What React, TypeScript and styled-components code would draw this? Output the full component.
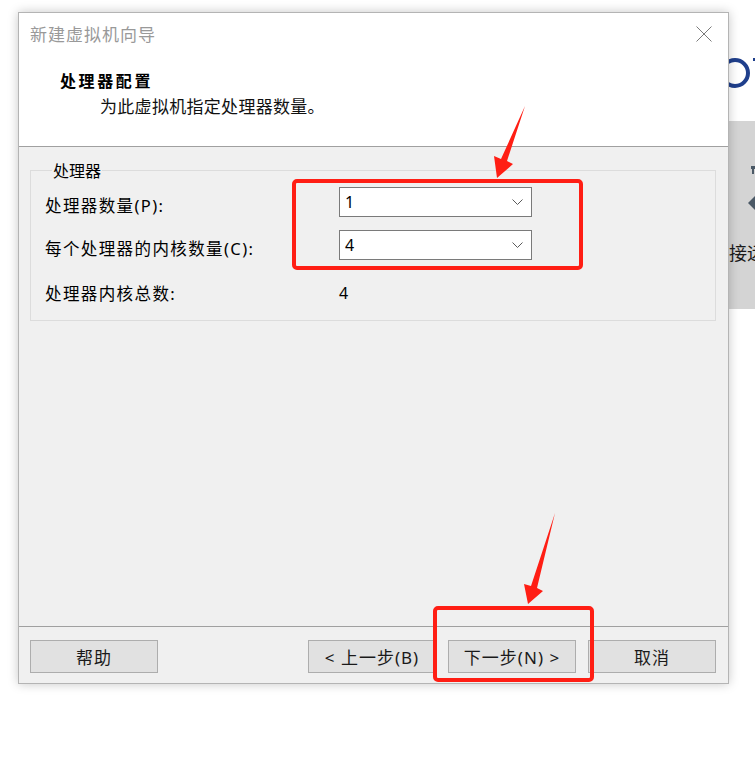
import styled, { createGlobalStyle } from 'styled-components'

const GlobalStyle = createGlobalStyle`
    html, body {
        margin: 0;
        padding: 0;
        background: #ffffff;
    }
    body {
        font-family: "Noto Sans CJK SC", "Noto Sans", sans-serif;
    }
`

const fields = [
    { label: '处理器数量(P):', value: '1' },
    { label: '每个处理器的内核数量(C):', value: '4' },
]

const buttons = [
    { text: '< 上一步(B)' },
    { text: '下一步(N) >' },
    { text: '取消' },
]

const Chevron = () => (
    <svg width="11" height="6" viewBox="0 0 11 6">
        <polyline points="0.5,0.5 5.5,5.5 10.5,0.5" fill="none" stroke="#5a5a5a" strokeWidth="1" />
    </svg>
)

const CloseIcon = () => (
    <svg width="16" height="16" viewBox="0 0 16 16">
        <line x1="0.5" y1="0.5" x2="15.5" y2="15.5" stroke="#7a7a7a" strokeWidth="1" />
        <line x1="15.5" y1="0.5" x2="0.5" y2="15.5" stroke="#7a7a7a" strokeWidth="1" />
    </svg>
)

const App = () => {
    return (
        <>
            <GlobalStyle />
            <Page>
                <DialogArea>
                    <Dialog>
                        <Header>
                            <TitleBar>
                                <Title>新建虚拟机向导</Title>
                                <CloseButton><CloseIcon /></CloseButton>
                            </TitleBar>
                            <Heading>处理器配置</Heading>
                            <Subtitle>为此虚拟机指定处理器数量。</Subtitle>
                        </Header>
                        <Body>
                            <Group>
                                <Legend>处理器</Legend>
                                <FieldGrid>
                                    {fields.map(f => (
                                        <Row key={f.label}>
                                            <Label>{f.label}</Label>
                                            <Dropdown>
                                                <span>{f.value}</span>
                                                <Chevron />
                                            </Dropdown>
                                        </Row>
                                    ))}
                                    <Row $last>
                                        <Label>处理器内核总数:</Label>
                                        <Total>4</Total>
                                    </Row>
                                </FieldGrid>
                            </Group>
                        </Body>
                        <Footer>
                            <Button>帮助</Button>
                            <ButtonGroup>
                                {buttons.map(b => (
                                    <Button key={b.text}>{b.text}</Button>
                                ))}
                            </ButtonGroup>
                        </Footer>
                    </Dialog>
                </DialogArea>
                <BackApp>
                    <BackTop>
                        <svg width="26" height="121" viewBox="0 0 26 121">
                            <circle cx="6" cy="73" r="13" fill="none" stroke="#1f3f8c" strokeWidth="4" />
                            <rect x="24" y="58" width="2" height="3" fill="#1f3f8c" />
                        </svg>
                    </BackTop>
                    <BackPanel>
                        <PanelIcons width="26" height="100" viewBox="0 0 26 100">
                            <rect x="22" y="45" width="4" height="3" fill="#4b5966" />
                            <rect x="23" y="45" width="2" height="8" fill="#4b5966" />
                            <polygon points="26,75 19,82 26,89" fill="#4b5966" />
                        </PanelIcons>
                        <PanelText>接远</PanelText>
                    </BackPanel>
                </BackApp>
                <Annotations width="755" height="758" viewBox="0 0 755 758">
                    <rect x="294" y="181" width="287" height="87" rx="3" fill="none" stroke="#ff1e14" strokeWidth="4" />
                    <rect x="435" y="608" width="157" height="72" rx="3" fill="none" stroke="#ff1e14" strokeWidth="4" />
                    <polygon points="525,106 507,161 513,164 497,178 494,156 501,159" fill="#ff1e14" />
                    <polygon points="555,513 537,588 543,591 528,604 524,584 531,586" fill="#ff1e14" />
                </Annotations>
            </Page>
        </>
    )
}

const Page = styled.div`
    position: relative;
    width: 755px;
    height: 758px;
    display: flex;
    overflow: hidden;
`

const DialogArea = styled.div`
    padding: 12px 0 0 18px;
    position: relative;
    z-index: 1;
`

const Dialog = styled.div`
    width: 709px;
    height: 670px;
    border: 1px solid #b4b4b4;
    box-shadow: 0 0 10px rgba(0, 0, 0, 0.22);
    display: flex;
    flex-direction: column;
    background: #f0f0f0;
`

const Header = styled.div`
    height: 133px;
    background: #ffffff;
    border-bottom: 1px solid #a0a0a0;
    display: flex;
    flex-direction: column;
`

const TitleBar = styled.div`
    height: 42px;
    display: flex;
    align-items: center;
    justify-content: space-between;
    padding: 0 16px 0 11px;
`

const Title = styled.div`
    font-size: 17px;
    letter-spacing: 1px;
    color: #999999;
    line-height: 20px;
`

const CloseButton = styled.div`
    display: flex;
`

const Heading = styled.div`
    margin-top: 15px;
    padding-left: 41px;
    font-size: 16px;
    font-weight: bold;
    letter-spacing: 2.6px;
    color: #000000;
    line-height: 20px;
`

const Subtitle = styled.div`
    margin-top: 6px;
    padding-left: 81px;
    font-size: 17px;
    letter-spacing: 0.3px;
    color: #111111;
    line-height: 20px;
`

const Body = styled.div`
    flex: 1;
    padding: 14px 12px 0 11px;
`

const Group = styled.fieldset`
    margin: 0;
    border: 1px solid #dcdcdc;
    padding: 8px 14px 14px 14px;
`

const Legend = styled.legend`
    margin-left: 7px;
    padding: 0 1px;
    font-size: 16px;
    line-height: 18px;
    color: #000000;
`

const FieldGrid = styled.div`
    display: flex;
    flex-direction: column;
    gap: 13px;
`

const Row = styled.div<{ $last?: boolean }>`
    display: grid;
    grid-template-columns: 294px 193px;
    align-items: center;
    height: ${p => (p.$last ? 31 : 30)}px;
    margin-top: ${p => (p.$last ? 2 : 0)}px;
`

const Label = styled.div`
    font-family: "Noto Sans", "Noto Sans CJK SC", sans-serif;
    font-size: 16.5px;
    letter-spacing: 1.4px;
    color: #000000;
    padding-top: 5px;
    white-space: nowrap;
`

const Dropdown = styled.div`
    box-sizing: border-box;
    height: 30px;
    border: 1px solid #7a7a7a;
    background: #ffffff;
    display: flex;
    align-items: center;
    justify-content: space-between;
    padding: 0 8px 0 5px;
    font-family: "Noto Sans", sans-serif;
    font-size: 16px;
    color: #000000;
`

const Total = styled.div`
    font-family: "Noto Sans", sans-serif;
    font-size: 16px;
    color: #000000;
    padding-top: 5px;
`

const Footer = styled.div`
    height: 57px;
    border-top: 1px solid #a0a0a0;
    display: flex;
    align-items: flex-start;
    justify-content: space-between;
    padding: 13px 12px 0 11px;
    box-sizing: border-box;
`

const ButtonGroup = styled.div`
    display: flex;
    gap: 12px;
`

const Button = styled.div`
    box-sizing: border-box;
    width: 128px;
    height: 33px;
    border: 1px solid #adadad;
    background: #e1e1e1;
    display: flex;
    align-items: center;
    justify-content: center;
    font-family: "Noto Sans", "Noto Sans CJK SC", sans-serif;
    font-size: 17px;
    letter-spacing: 1px;
    color: #1a1a1a;
    white-space: nowrap;
`

const BackApp = styled.div`
    flex: 1;
    display: flex;
    flex-direction: column;
    overflow: hidden;
`

const BackTop = styled.div`
    height: 121px;
    background: #ffffff;
    display: flex;
`

const BackPanel = styled.div`
    height: 188px;
    background: #d4d4d4;
    display: flex;
    flex-direction: column;
`

const PanelIcons = styled.svg`
    display: block;
`

const PanelText = styled.div`
    margin-top: 20px;
    font-size: 18px;
    line-height: 22px;
    color: #1a1a1a;
    white-space: nowrap;
`

const Annotations = styled.svg`
    position: absolute;
    left: 0;
    top: 0;
    z-index: 2;
    pointer-events: none;
`

export default App
